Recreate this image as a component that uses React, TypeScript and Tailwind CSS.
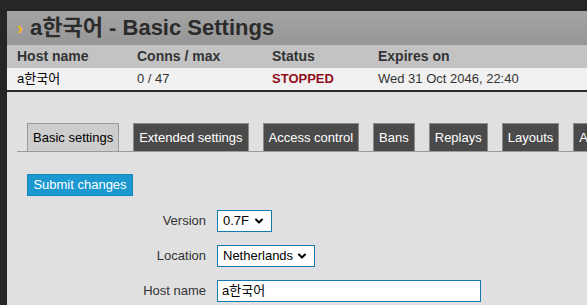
import { ChevronDown } from "lucide-react";

const tabs = [
    "Basic settings",
    "Extended settings",
    "Access control",
    "Bans",
    "Replays",
    "Layouts",
    "Advanced",
];

function FakeSelect({ value, width }: { value: string; width: string }) {
    return (
        <div
            className={`${width} h-[22px] flex items-center justify-between border border-[#1479b0] bg-white pl-[5px] pr-[6px] text-[13px] text-black`}
        >
            <span>{value}</span>
            <ChevronDown size={12} strokeWidth={4} className="text-black" />
        </div>
    );
}

export default function App() {
    return (
        <div
            className="w-[587px] h-[305px] overflow-hidden bg-[#262626] pl-[7px] pt-[11px]"
            style={{ fontFamily: '"Liberation Sans", Arial, "Noto Sans CJK KR", sans-serif' }}
        >
            <div className="w-[620px] h-full bg-[#e0e0e1]">
                {/* title */}
                <div className="h-[34px] flex items-center pl-[10px] bg-gradient-to-b from-[#a4a4a4] to-[#969696]">
                    <span className="text-[#f2b81c] font-bold text-[18px] mr-[7px] leading-none">›</span>
                    <h1 className="text-[22px] font-bold text-[#2b2b2b] leading-none">a한국어 - Basic Settings</h1>
                </div>

                {/* host table */}
                <div className="h-[23px] flex items-center bg-[#c3c3c3] text-[14px] font-bold text-[#333]">
                    <div className="w-[130px] pl-[10px]">Host name</div>
                    <div className="w-[135px]">Conns / max</div>
                    <div className="w-[106px]">Status</div>
                    <div>Expires on</div>
                </div>
                <div className="h-[24px] flex items-center bg-[#f1f1f1] border-b-2 border-[#2a2a2a] text-[13px] text-[#333]">
                    <div className="w-[130px] pl-[10px] text-black">a한국어</div>
                    <div className="w-[135px]">0 / 47</div>
                    <div className="w-[106px] text-[#900f1c] font-bold">STOPPED</div>
                    <div>Wed 31 Oct 2046, 22:40</div>
                </div>

                {/* tabs */}
                <div className="mt-[31px] ml-[10px] flex gap-[14px] border-b border-[#9a9a9a] pl-[10px]">
                    {tabs.map((t, i) => (
                        <div
                            key={t}
                            className={
                                i === 0
                                    ? "h-[28px] flex items-center px-[5px] bg-[#cdcdcd] border border-b-0 border-[#9a9a9a] text-[13px] text-black whitespace-nowrap"
                                    : "h-[28px] flex items-center px-[5px] bg-[#4a4a4a] border border-b-0 border-[#8a8a8a] text-[13px] text-white whitespace-nowrap"
                            }
                        >
                            {t}
                        </div>
                    ))}
                </div>

                {/* submit */}
                <div className="mt-[20px] ml-[20px]">
                    <button className="h-[22px] w-[106px] bg-[#1a98cf] text-white text-[13px] border border-[#1487bb]">
                        Submit changes
                    </button>
                </div>

                {/* form */}
                <div className="mt-[14px] grid grid-cols-[199px_auto] gap-x-[11px] gap-y-[13px] items-center text-[13px] text-[#333]">
                    <div className="text-right">Version</div>
                    <FakeSelect value="0.7F" width="w-[55px]" />
                    <div className="text-right">Location</div>
                    <FakeSelect value="Netherlands" width="w-[98px]" />
                    <div className="text-right">Host name</div>
                    <div className="w-[264px] h-[22px] flex items-center border border-[#1479b0] bg-white pl-[4px] text-black">
                        a한국어
                    </div>
                </div>
            </div>
        </div>
    );
}
